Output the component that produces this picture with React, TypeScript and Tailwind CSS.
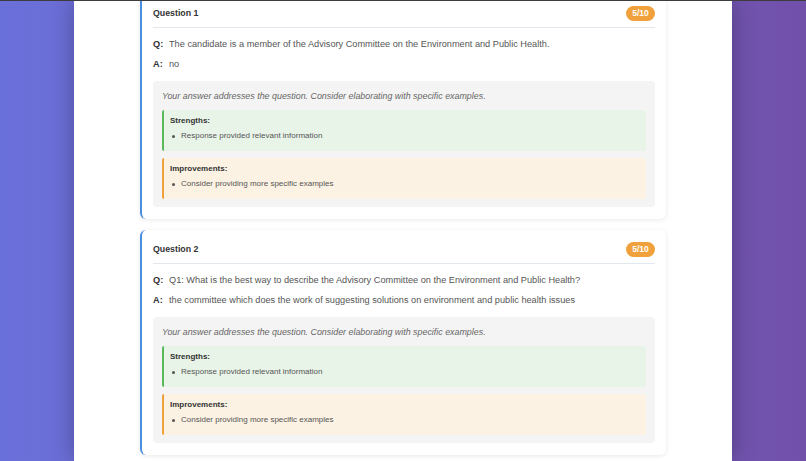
import React from "react";

type Item = { title: string; q: string; a: string };

const items: Item[] = [
  {
    title: "Question 1",
    q: "The candidate is a member of the Advisory Committee on the Environment and Public Health.",
    a: "no",
  },
  {
    title: "Question 2",
    q: "Q1: What is the best way to describe the Advisory Committee on the Environment and Public Health?",
    a: "the committee which does the work of suggesting solutions on environment and public health issues",
  },
];

function Bullet({ text }: { text: string }) {
  return (
    <div className="mt-[4px] flex items-center text-[8px] leading-[12px] text-[#555]">
      <span className="ml-[2px] mr-[6px] h-[3px] w-[3px] rounded-full bg-[#555]" />
      <span>{text}</span>
    </div>
  );
}

function Card({ item }: { item: Item }) {
  return (
    <div className="rounded-[6px] border-l-2 border-[#4a90e2] bg-white pl-[11px] pr-[11px] pt-[12px] pb-[12px] shadow-[0_1px_5px_rgba(0,0,0,0.09)]">
      <div className="flex items-center justify-between border-b border-[#e3e8ef] pb-[6px]">
        <div className="text-[8.8px] font-bold leading-[15px] text-[#333]">{item.title}</div>
        <div className="flex h-[15px] w-[29px] items-center justify-center rounded-full bg-[#f0a13b] text-[8.5px] font-bold text-white">
          5/10
        </div>
      </div>
      <div className="mt-[9px] flex text-[9.2px] leading-[14px] text-[#555]">
        <span className="w-[16px] shrink-0 font-bold text-[#333]">Q:</span>
        <span>{item.q}</span>
      </div>
      <div className="mt-[6px] flex text-[9.2px] leading-[14px] text-[#555]">
        <span className="w-[16px] shrink-0 font-bold text-[#333]">A:</span>
        <span>{item.a}</span>
      </div>
      <div className="mt-[10px] rounded-[4px] bg-[#f4f4f4] px-[9px] pt-[8px] pb-[8px]">
        <div className="text-[8.9px] italic leading-[14px] text-[#666]">
          Your answer addresses the question. Consider elaborating with specific examples.
        </div>
        <div className="mt-[7px] rounded-[2px] border-l-2 border-[#5cb85c] bg-[#e8f4e8] pl-[6px] pt-[6px] pb-[9px]">
          <div className="text-[8px] font-bold leading-[10px] text-[#333]">Strengths:</div>
          <Bullet text="Response provided relevant information" />
        </div>
        <div className="mt-[7px] rounded-[2px] border-l-2 border-[#f0a13b] bg-[#fcf2e3] pl-[6px] pt-[6px] pb-[9px]">
          <div className="text-[8px] font-bold leading-[10px] text-[#333]">Improvements:</div>
          <Bullet text="Consider providing more specific examples" />
        </div>
      </div>
    </div>
  );
}

export default function App() {
  return (
    <div
      className="relative h-[461px] w-full overflow-hidden bg-gradient-to-r from-[#6a70da] to-[#7150aa]"
      style={{ fontFamily: '"Liberation Sans", Arial, sans-serif' }}
    >
      <div className="absolute left-0 right-0 top-0 z-10 h-px bg-[#3c3c3c]" />
      <div className="mx-auto flex h-full w-[658px] flex-col bg-white px-[66px] shadow-[0_0_22px_rgba(0,0,0,0.28)]">
        <div className="-mt-[6px] flex flex-col gap-[11px]">
          {items.map((it) => (
            <Card key={it.title} item={it} />
          ))}
        </div>
      </div>
    </div>
  );
}
